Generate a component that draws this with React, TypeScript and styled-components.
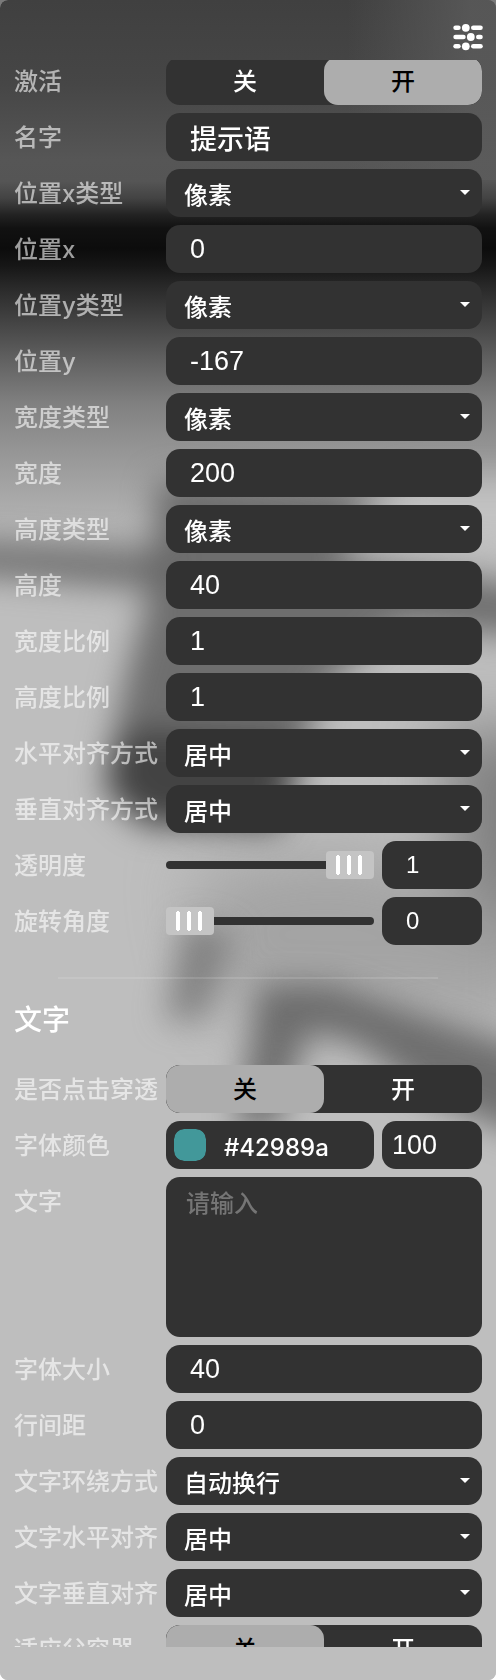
import React, { useId, useLayoutEffect, useRef, useState } from "react";
import styled, { createGlobalStyle, css } from "styled-components";

const GlobalStyle = createGlobalStyle`
  * { box-sizing: border-box; }
  body {
    margin: 0;
    background: linear-gradient(#7a7a7a 50%, #ffffff 50%);
    font-family: Inter, "Noto Sans CJK SC", sans-serif;
    font-weight: 500;
    color: #ffffff;
  }
  button, input, select, textarea { font: inherit; color: inherit; margin: 0; }
`;

const Panel = styled.main`
  position: relative;
  isolation: isolate;
  display: flex;
  flex-direction: column;
  height: 100vh;
  padding-bottom: 33px;
  border-radius: 8px;
  overflow: hidden;
  background: #bebebe;
`;

const Backdrop = styled.svg`
  position: absolute;
  inset: 0;
  z-index: -1;
  width: 100%;
  height: 100%;
`;

const Header = styled.header`
  flex: none;
  display: flex;
  justify-content: flex-end;
  align-items: flex-end;
  height: 60px;
  padding: 0 13px 9px;
`;

const IconButton = styled.button`
  display: block;
  padding: 0;
  border: 0;
  background: none;
  cursor: pointer;
  svg { display: block; }
`;

const ScrollArea = styled.div`
  flex: 1;
  min-height: 0;
  overflow-y: auto;
  scrollbar-width: none;
`;

const Rows = styled.section`
  display: flex;
  flex-direction: column;
  gap: 8px;
  padding: 0 14px;
`;

const RowBox = styled.div`
  display: grid;
  grid-template-columns: 144px minmax(0, 1fr);
  column-gap: 8px;
  align-items: start;
`;

const labelText = css`
  height: 48px;
  font-size: 24px;
  line-height: 50px;
  white-space: nowrap;
  color: rgba(255, 255, 255, 0.6);
`;

const Label = styled.label`
  ${labelText}
`;

const GroupLabel = styled.span`
  ${labelText}
`;

const Divider = styled.hr`
  width: calc(100% - 116px);
  height: 2px;
  margin: 32px auto 24px;
  border: 0;
  background: rgba(255, 255, 255, 0.12);
`;

const SectionTitle = styled.h2`
  height: 32px;
  margin: 0 14px 30px;
  font-size: 28px;
  font-weight: 500;
  line-height: 34px;
`;

const field = css`
  width: 100%;
  height: 48px;
  border: 0;
  border-radius: 14px;
  outline: none;
  background: #323232;
`;

const TextInput = styled.input<{ $inset?: number; $size?: number }>`
  ${field}
  padding: 0 0 0 ${(p) => p.$inset ?? 24}px;
  font-family: "Liberation Sans", "Noto Sans CJK SC", sans-serif;
  font-size: ${(p) => p.$size ?? 27}px;
`;

const SelectBox = styled.div`
  display: grid;
  align-items: center;
  > * { grid-area: 1 / 1; }
`;

const NativeSelect = styled.select`
  ${field}
  appearance: none;
  padding: 4px 32px 0 18px;
  font-size: 24px;
`;

const Arrow = styled.svg`
  justify-self: end;
  margin: 0 12px 2px 0;
  pointer-events: none;
`;

const Segments = styled.div`
  display: grid;
  grid-template-columns: 1fr 1fr;
  height: 48px;
  border-radius: 14px;
  overflow: hidden;
  background: #323232;
`;

const Segment = styled.label`
  position: relative;
  height: 48px;
  border-radius: 14px;
  font-size: 24px;
  line-height: 50px;
  text-align: center;
  cursor: pointer;
  &:has(:checked) {
    background: #adadad;
    color: #000000;
  }
`;

const HiddenRadio = styled.input`
  position: absolute;
  inset: 0;
  opacity: 0;
`;

const Pair = styled.div`
  display: grid;
  grid-template-columns: minmax(0, 1fr) 100px;
  gap: 8px;
`;

const Slider = styled.input`
  appearance: none;
  width: 100%;
  height: 48px;
  background: none;
  outline: none;
  &::-webkit-slider-runnable-track {
    height: 8px;
    border-radius: 4px;
    background: #323232;
  }
  &::-webkit-slider-thumb {
    appearance: none;
    width: 48px;
    height: 28px;
    margin-top: -10px;
    border-radius: 4px;
    background:
      linear-gradient(#fff, #fff) 10px 5px / 4px 18px no-repeat,
      linear-gradient(#fff, #fff) 11px 4px / 2px 20px no-repeat,
      linear-gradient(#fff, #fff) 21px 5px / 4px 18px no-repeat,
      linear-gradient(#fff, #fff) 22px 4px / 2px 20px no-repeat,
      linear-gradient(#fff, #fff) 32px 5px / 4px 18px no-repeat,
      linear-gradient(#fff, #fff) 33px 4px / 2px 20px no-repeat,
      #c4c4c4;
  }
`;

const ColorBox = styled.div`
  ${field}
  display: flex;
  align-items: center;
  padding: 0 8px;
`;

const Swatch = styled.input`
  flex: none;
  appearance: none;
  width: 32px;
  height: 32px;
  padding: 0;
  border: 0;
  border-radius: 10px;
  overflow: hidden;
  background: none;
  &::-webkit-color-swatch-wrapper { padding: 0; }
  &::-webkit-color-swatch { border: 0; border-radius: 10px; }
`;

const HexInput = styled.input`
  flex: 1;
  min-width: 0;
  height: 48px;
  padding: 4px 0 0 18px;
  border: 0;
  outline: none;
  background: none;
  font-size: 24px;
`;

const TextArea = styled.textarea`
  ${field}
  display: block;
  height: 160px;
  padding: 11px 20px;
  resize: none;
  font-size: 24px;
  line-height: 32px;
  &::placeholder { color: #757575; opacity: 1; }
`;

function SlidersIcon() {
  return (
    <svg width="30" height="28" viewBox="0 0 30 28" fill="#fff" aria-hidden="true">
      <rect x="0.3" y="2.5" width="7.4" height="4.6" rx="2.3" />
      <circle cx="12.8" cy="4.8" r="3.9" />
      <rect x="18" y="2.5" width="11.8" height="4.6" rx="2.3" />
      <rect x="0.3" y="11.7" width="12.4" height="4.6" rx="2.3" />
      <circle cx="17.8" cy="14" r="3.9" />
      <rect x="23" y="11.7" width="6.8" height="4.6" rx="2.3" />
      <rect x="0.3" y="21" width="7.4" height="4.6" rx="2.3" />
      <circle cx="12.8" cy="23.3" r="3.9" />
      <rect x="18" y="21" width="11.8" height="4.6" rx="2.3" />
    </svg>
  );
}

function BlurredScene() {
  return (
    <Backdrop viewBox="0 0 496 1680" preserveAspectRatio="none" aria-hidden="true">
      <defs>
        <linearGradient id="sky" x1="0" y1="0" x2="0" y2="1680" gradientUnits="userSpaceOnUse">
          <stop offset="0" stopColor="#404040" />
          <stop offset="0.05" stopColor="#464646" />
          <stop offset="0.095" stopColor="#565656" />
          <stop offset="0.108" stopColor="#555555" />
          <stop offset="0.118" stopColor="#434343" />
          <stop offset="0.128" stopColor="#222222" />
          <stop offset="0.136" stopColor="#111111" />
          <stop offset="0.148" stopColor="#0c0c0c" />
          <stop offset="0.158" stopColor="#161616" />
          <stop offset="0.17" stopColor="#282828" />
          <stop offset="0.195" stopColor="#484848" />
          <stop offset="0.215" stopColor="#626262" />
          <stop offset="0.24" stopColor="#808080" />
          <stop offset="0.265" stopColor="#939393" />
          <stop offset="0.31" stopColor="#b2b2b2" />
          <stop offset="0.35" stopColor="#bebebe" />
          <stop offset="1" stopColor="#bebebe" />
        </linearGradient>
        <linearGradient id="glow" x1="0" y1="0" x2="1" y2="0">
          <stop offset="0.7" stopColor="#5c5c5c" stopOpacity="0" />
          <stop offset="0.95" stopColor="#5c5c5c" stopOpacity="0.8" />
        </linearGradient>
        <filter id="soft" x="-50%" y="-50%" width="200%" height="200%" colorInterpolationFilters="sRGB">
          <feGaussianBlur stdDeviation="16" />
        </filter>
        <filter id="wide" x="-50%" y="-50%" width="200%" height="200%" colorInterpolationFilters="sRGB">
          <feGaussianBlur stdDeviation="32" />
        </filter>
      </defs>
      <rect width="496" height="1680" fill="url(#sky)" />
      <rect width="496" height="180" fill="url(#glow)" />
      <g filter="url(#wide)">
        <polygon points="440,730 580,730 580,960 460,920" fill="#6a6a6a" opacity="0.75" />
        <polygon points="190,870 340,850 540,900 540,1020 220,1010" fill="#989898" opacity="0.7" />
      </g>
      <g filter="url(#soft)">
        <polygon points="-60,540 170,550 170,592 -60,572" fill="#606060" opacity="0.8" />
        <polygon points="158,480 370,490 340,560 560,590 560,640 400,625 320,690 300,780 280,830 140,825 102,790 125,680 150,590" fill="#606060" opacity="0.85" />
        <polygon points="140,730 290,740 280,826 150,826 108,785 115,745" fill="#2c2c2c" opacity="0.65" />
        <polygon points="400,480 560,480 560,560 380,550" fill="#c4c4c4" opacity="0.9" />
        <polygon points="185,920 235,935 205,1020 165,1020" fill="#6c6c6c" opacity="0.7" />
        <polygon points="260,985 330,985 420,1015 560,1060 560,1150 430,1100 360,1045 310,1030 275,1130 235,1130" fill="#565656" opacity="0.75" />
      </g>
    </Backdrop>
  );
}

type RowProps = { label: string; children: (id: string) => React.ReactNode; group?: boolean };

function Row({ label, children, group }: RowProps) {
  const id = useId();
  return (
    <RowBox>
      {group ? <GroupLabel id={id}>{label}</GroupLabel> : <Label htmlFor={id}>{label}</Label>}
      {children(id)}
    </RowBox>
  );
}

function InputRow({ label, value }: { label: string; value: string }) {
  return <Row label={label}>{(id) => <TextInput id={id} type="text" defaultValue={value} />}</Row>;
}

function SelectRow({ label, value }: { label: string; value: string }) {
  return (
    <Row label={label}>
      {(id) => (
        <SelectBox>
          <NativeSelect id={id} defaultValue={value}>
            <option>{value}</option>
          </NativeSelect>
          <Arrow width="10" height="5" viewBox="0 0 10 5" aria-hidden="true">
            <path d="M0 0h10L5 5z" fill="#fff" />
          </Arrow>
        </SelectBox>
      )}
    </Row>
  );
}

function SwitchRow({ label, on = false }: { label: string; on?: boolean }) {
  return (
    <Row label={label} group>
      {(id) => (
        <Segments role="radiogroup" aria-labelledby={id}>
          <Segment>
            <HiddenRadio type="radio" name={id} defaultChecked={!on} />关
          </Segment>
          <Segment>
            <HiddenRadio type="radio" name={id} defaultChecked={on} />开
          </Segment>
        </Segments>
      )}
    </Row>
  );
}

function SliderRow({ label, initial, max, step }: { label: string; initial: number; max: number; step: number }) {
  const [value, setValue] = useState(String(initial));
  return (
    <Row label={label}>
      {(id) => (
        <Pair>
          <Slider id={id} type="range" min={0} max={max} step={step} value={value} onChange={(e) => setValue(e.target.value)} />
          <TextInput aria-label={label} $size={24} value={value} onChange={(e) => setValue(e.target.value)} />
        </Pair>
      )}
    </Row>
  );
}

function ColorRow({ label, initial }: { label: string; initial: string }) {
  const [color, setColor] = useState(initial);
  return (
    <Row label={label}>
      {(id) => (
        <Pair>
          <ColorBox>
            <Swatch id={id} type="color" value={color} onChange={(e) => setColor(e.target.value)} />
            <HexInput aria-label={label} value={color} onChange={(e) => setColor(e.target.value)} />
          </ColorBox>
          <TextInput aria-label={label} $inset={10} defaultValue="100" />
        </Pair>
      )}
    </Row>
  );
}

export default function App() {
  const scroller = useRef<HTMLDivElement>(null);

  useLayoutEffect(() => {
    if (scroller.current) scroller.current.scrollTop = 3;
  }, []);

  return (
    <>
      <GlobalStyle />
      <Panel>
        <BlurredScene />
        <Header>
          <IconButton type="button" aria-label="设置">
            <SlidersIcon />
          </IconButton>
        </Header>
        <ScrollArea ref={scroller}>
          <Rows>
            <SwitchRow label="激活" on />
            <InputRow label="名字" value="提示语" />
            <SelectRow label="位置x类型" value="像素" />
            <InputRow label="位置x" value="0" />
            <SelectRow label="位置y类型" value="像素" />
            <InputRow label="位置y" value="-167" />
            <SelectRow label="宽度类型" value="像素" />
            <InputRow label="宽度" value="200" />
            <SelectRow label="高度类型" value="像素" />
            <InputRow label="高度" value="40" />
            <InputRow label="宽度比例" value="1" />
            <InputRow label="高度比例" value="1" />
            <SelectRow label="水平对齐方式" value="居中" />
            <SelectRow label="垂直对齐方式" value="居中" />
            <SliderRow label="透明度" initial={1} max={1} step={0.01} />
            <SliderRow label="旋转角度" initial={0} max={360} step={1} />
          </Rows>
          <Divider />
          <SectionTitle>文字</SectionTitle>
          <Rows>
            <SwitchRow label="是否点击穿透" />
            <ColorRow label="字体颜色" initial="#42989a" />
            <Row label="文字">{(id) => <TextArea id={id} placeholder="请输入" />}</Row>
            <InputRow label="字体大小" value="40" />
            <InputRow label="行间距" value="0" />
            <SelectRow label="文字环绕方式" value="自动换行" />
            <SelectRow label="文字水平对齐" value="居中" />
            <SelectRow label="文字垂直对齐" value="居中" />
            <SwitchRow label="适应父容器" />
          </Rows>
        </ScrollArea>
      </Panel>
    </>
  );
}
